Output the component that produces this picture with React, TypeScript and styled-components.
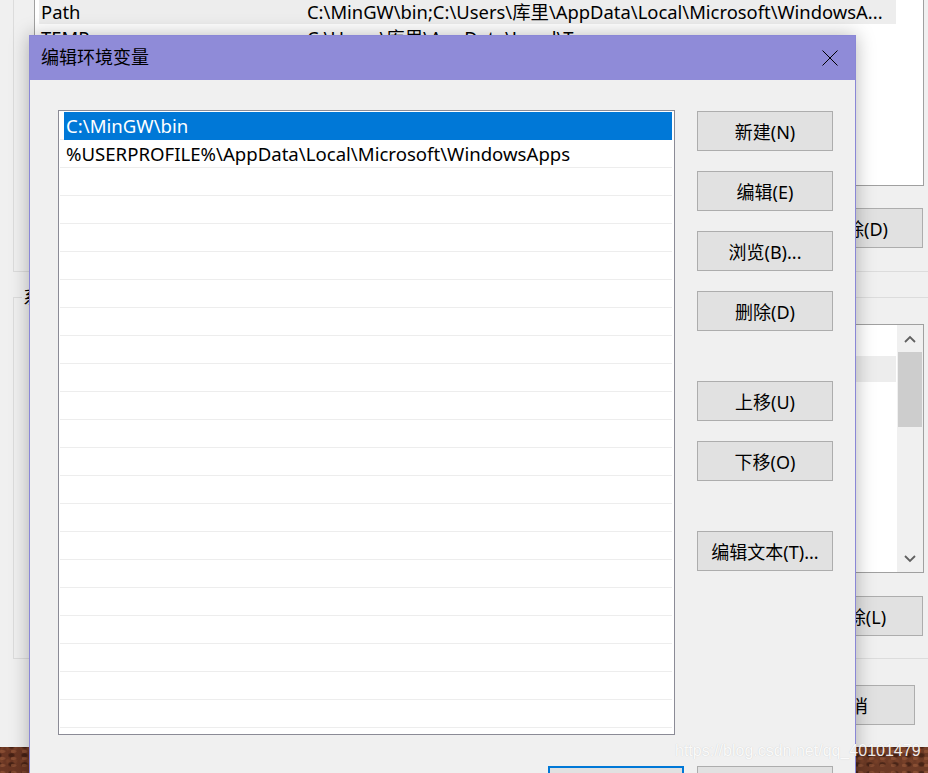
import React from "react";
import styled, { createGlobalStyle, css } from "styled-components";

const FONT = `"Noto Sans", "Noto Sans CJK SC", sans-serif`;

const Global = createGlobalStyle`
  html, body { margin: 0; padding: 0; background: #f0f0f0; }
  body { font-family: ${FONT}; color: #000; }
  * { box-sizing: border-box; }
`;

const Screen = styled.div`
  position: relative;
  width: 928px;
  height: 773px;
  overflow: hidden;
  background:
    radial-gradient(ellipse at 20% 35%, rgba(160, 95, 62, 0.55) 0 2px, transparent 4px) 0 0 / 11px 7px,
    radial-gradient(ellipse at 65% 70%, rgba(40, 16, 9, 0.55) 0 2px, transparent 4px) 3px 2px / 13px 9px,
    radial-gradient(circle at 45% 25%, rgba(130, 72, 45, 0.5) 0 1px, transparent 3px) 5px 4px / 7px 13px,
    linear-gradient(90deg, #6a3623, #5a2c1b 40%, #6e3b26);
`;

/* ---------- background window (环境变量) ---------- */

const BgWindow = styled.div`
  width: 940px;
  height: 747px;
  background: #f0f0f0;
  padding: 0 5px 0 13px;
  display: flex;
  flex-direction: column;
  font-size: 18.4px;
`;

const GroupBox = styled.section<{ $h: number; $top?: boolean }>`
  height: ${(p) => p.$h}px;
  border-left: 1px solid #dcdcdc;
  border-bottom: 1px solid #dcdcdc;
  ${(p) =>
    p.$top &&
    css`
      border-top: 1px solid #dcdcdc;
      margin-top: 25px;
    `}
  padding: 0 11px 0 20px;
  display: flex;
  flex-direction: column;
`;

const Legend = styled.div`
  align-self: flex-start;
  margin: -13px 0 0 -12px;
  padding: 0 1px;
  background: #f0f0f0;
  line-height: 24px;
  font-size: 18px;
`;

const VarList = styled.div<{ $h: number; $cropTop?: boolean; $mt?: number }>`
  height: ${(p) => p.$h}px;
  margin-top: ${(p) => p.$mt ?? 0}px;
  background: #fff;
  border: 1px solid #a0a0a0;
  ${(p) =>
    p.$cropTop &&
    css`
      border-top: none;
    `}
  display: flex;
  overflow: hidden;
`;

const VarBody = styled.div`
  flex: 1;
  display: flex;
  flex-direction: column;
  min-width: 0;
`;

const VarHeader = styled.div`
  height: 31px;
  display: flex;
  align-items: center;
  margin-left: 4px;
  flex-shrink: 0;
`;

const VarRow = styled.div<{ $sel?: boolean }>`
  height: 26px;
  flex-shrink: 0;
  width: 857px;
  margin-left: 4px;
  display: flex;
  align-items: center;
  white-space: nowrap;
  overflow: hidden;
  background: ${(p) => (p.$sel ? "#ededed" : "transparent")};
`;

const NameCell = styled.span`
  width: 268px;
  padding-left: 2px;
  flex-shrink: 0;
  overflow: hidden;
`;

const ValueCell = styled.span`
  flex: 1;
  overflow: hidden;
  white-space: nowrap;
`;

const ScrollBar = styled.div`
  width: 26px;
  flex-shrink: 0;
  background: #f0f0f0;
  display: flex;
  flex-direction: column;
  align-items: center;
`;

const ScrollArrow = styled.div`
  height: 27px;
  width: 100%;
  display: flex;
  align-items: center;
  justify-content: center;
`;

const ScrollThumb = styled.div`
  width: 24px;
  height: 75px;
  background: #cdcdcd;
`;

const ScrollTrack = styled.div`
  flex: 1;
`;

const BgButtonRow = styled.div<{ $mt: number; $pr?: number }>`
  margin-top: ${(p) => p.$mt}px;
  padding-right: ${(p) => p.$pr ?? 1}px;
  display: flex;
  justify-content: flex-end;
  gap: 12px;
`;

const BgButton = styled.button`
  width: 130px;
  height: 40px;
  background: #e1e1e1;
  border: 1px solid #adadad;
  font-family: ${FONT};
  font-size: 18px;
  color: #000;
  padding: 0;
`;

/* ---------- foreground dialog (编辑环境变量) ---------- */

const Dialog = styled.div`
  position: absolute;
  left: 29px;
  top: 35px;
  width: 827px;
  height: 760px;
  border: 1px solid #8a87d6;
  background: #f0f0f0;
  box-shadow: 0 0 18px rgba(0, 0, 0, 0.28);
  display: flex;
  flex-direction: column;
`;

const TitleBar = styled.div`
  height: 44px;
  flex-shrink: 0;
  background: #8f8bd8;
  display: flex;
  align-items: center;
  justify-content: space-between;
  padding-left: 11px;
`;

const Title = styled.span`
  font-size: 18px;
  line-height: 24px;
  margin-top: -4px;
  font-family: "Noto Sans CJK SC", sans-serif;
  color: #000;
`;

const CloseButton = styled.div`
  width: 50px;
  height: 44px;
  display: flex;
  align-items: center;
  justify-content: center;
`;

const DialogBody = styled.div`
  display: grid;
  grid-template-columns: 617px 136px;
  column-gap: 22px;
  padding: 30px 0 0 28px;
  align-items: start;
`;

const EntryList = styled.div`
  height: 625px;
  background: #fff;
  border: 1px solid #8b8b96;
  padding: 1px 2px 0 1px;
  overflow: hidden;
`;

const EntryRow = styled.div`
  height: 28px;
  border-bottom: 1px solid #ededed;
  padding-left: 4px;
  display: flex;
`;

const EntryCell = styled.div<{ $sel?: boolean }>`
  flex: 1;
  height: 28px;
  padding-left: 2px;
  line-height: 28px;
  font-size: 18.6px;
  white-space: nowrap;
  background: ${(p) => (p.$sel ? "#0078d7" : "transparent")};
  color: ${(p) => (p.$sel ? "#fff" : "#000")};
`;

const ButtonColumn = styled.div`
  padding-top: 1px;
  display: flex;
  flex-direction: column;
  gap: 20px;
`;

const DlgButton = styled.button<{ $gapAbove?: boolean; $primary?: boolean }>`
  width: 136px;
  height: 40px;
  flex-shrink: 0;
  background: #e1e1e1;
  border: ${(p) => (p.$primary ? "2px solid #0078d7" : "1px solid #adadad")};
  margin-top: ${(p) => (p.$gapAbove ? 30 : 0)}px;
  font-family: ${FONT};
  font-size: 18px;
  color: #000;
  padding: 0;
`;

const BottomBar = styled.div`
  grid-column: 1 / -1;
  margin-top: 31px;
  display: flex;
  justify-content: flex-end;
  gap: 13px;
`;

const Watermark = styled.div`
  position: absolute;
  left: 675px;
  top: 742px;
  font-family: "Liberation Sans", Arial, sans-serif;
  font-size: 16px;
  color: rgba(255, 255, 255, 0.92);
  text-shadow: 0 0 1px rgba(0, 0, 0, 0.18);
  white-space: nowrap;
`;

const Chevron = ({ up }: { up?: boolean }) => (
  <svg width="12" height="8" viewBox="0 0 12 8">
    <polyline
      points={up ? "1,7 6,2 11,7" : "1,1 6,6 11,1"}
      fill="none"
      stroke="#606060"
      strokeWidth="1.8"
    />
  </svg>
);

const entries = ["C:\\MinGW\\bin", "%USERPROFILE%\\AppData\\Local\\Microsoft\\WindowsApps"];

const sysVars: [string, string][] = [
  ["ComSpec", "C:\\WINDOWS\\system32\\cmd.exe"],
  ["DriverData", "C:\\Windows\\System32\\Drivers\\DriverData"],
  ["NUMBER_OF_PROCESSORS", "8"],
  ["OS", "Windows_NT"],
  ["Path", "C:\\WINDOWS\\system32;C:\\WINDOWS"],
  ["PATHEXT", ".COM;.EXE;.BAT;.CMD;.VBS"],
  ["PROCESSOR_ARCHITECTURE", "AMD64"],
  ["PROCESSOR_LEVEL", "6"],
];

export default function App() {
  return (
    <Screen>
      <Global />
      <BgWindow>
        <GroupBox $h={272}>
          <VarList $h={188} $mt={-2} $cropTop>
            <VarBody>
              <VarRow $sel>
                <NameCell>Path</NameCell>
                <ValueCell>C:\MinGW\bin;C:\Users\库里\AppData\Local\Microsoft\WindowsA...</ValueCell>
              </VarRow>
              <VarRow>
                <NameCell>TEMP</NameCell>
                <ValueCell>C:\Users\库里\AppData\Local\Temp</ValueCell>
              </VarRow>
              <VarRow>
                <NameCell>TMP</NameCell>
                <ValueCell>C:\Users\库里\AppData\Local\Temp</ValueCell>
              </VarRow>
            </VarBody>
          </VarList>
          <BgButtonRow $mt={22}>
            <BgButton>新建(N)...</BgButton>
            <BgButton>编辑(E)...</BgButton>
            <BgButton>删除(D)</BgButton>
          </BgButtonRow>
        </GroupBox>
        <GroupBox $h={362} $top>
          <Legend>系统变量(S)</Legend>
          <VarList $h={249} $mt={15}>
            <VarBody>
              <VarHeader>
                <NameCell>变量</NameCell>
                <ValueCell>值</ValueCell>
              </VarHeader>
              {sysVars.map(([n, v], i) => (
                <VarRow key={n} $sel={i === 0}>
                  <NameCell>{n}</NameCell>
                  <ValueCell>{v}</ValueCell>
                </VarRow>
              ))}
            </VarBody>
            <ScrollBar>
              <ScrollArrow>
                <Chevron up />
              </ScrollArrow>
              <ScrollThumb />
              <ScrollTrack />
              <ScrollArrow>
                <Chevron />
              </ScrollArrow>
            </ScrollBar>
          </VarList>
          <BgButtonRow $mt={23}>
            <BgButton>新建(W)...</BgButton>
            <BgButton>编辑(I)...</BgButton>
            <BgButton>删除(L)</BgButton>
          </BgButtonRow>
        </GroupBox>
        <BgButtonRow $mt={26} $pr={20}>
          <BgButton>确定</BgButton>
          <BgButton>取消</BgButton>
        </BgButtonRow>
      </BgWindow>

      <Dialog>
        <TitleBar>
          <Title>编辑环境变量</Title>
          <CloseButton>
            <svg width="16" height="16" viewBox="0 0 16 16">
              <line x1="0.5" y1="0.5" x2="15.5" y2="15.5" stroke="#000" strokeWidth="1" />
              <line x1="15.5" y1="0.5" x2="0.5" y2="15.5" stroke="#000" strokeWidth="1" />
            </svg>
          </CloseButton>
        </TitleBar>
        <DialogBody>
          <EntryList>
            {Array.from({ length: 23 }).map((_, i) => (
              <EntryRow key={i}>
                <EntryCell $sel={i === 0}>{entries[i] ?? ""}</EntryCell>
              </EntryRow>
            ))}
          </EntryList>
          <ButtonColumn>
            <DlgButton>新建(N)</DlgButton>
            <DlgButton>编辑(E)</DlgButton>
            <DlgButton>浏览(B)...</DlgButton>
            <DlgButton>删除(D)</DlgButton>
            <DlgButton $gapAbove>上移(U)</DlgButton>
            <DlgButton>下移(O)</DlgButton>
            <DlgButton $gapAbove>编辑文本(T)...</DlgButton>
          </ButtonColumn>
          <BottomBar>
            <DlgButton $primary>确定</DlgButton>
            <DlgButton>取消</DlgButton>
          </BottomBar>
        </DialogBody>
      </Dialog>

      <Watermark>https://blog.csdn.net/qq_40101479</Watermark>
    </Screen>
  );
}
